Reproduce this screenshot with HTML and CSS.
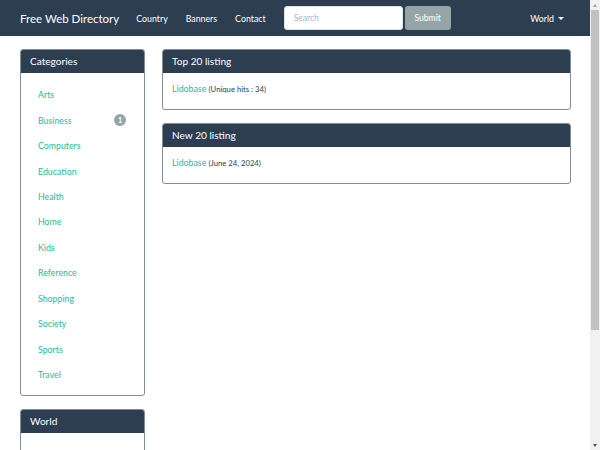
FILE: index.html
```html
<!DOCTYPE html>
<html>
<head>
<meta charset="utf-8">
<link rel="stylesheet" href="styles.css">
</head>
<body>
<nav class="navbar">
  <a class="brand" href="#">Free Web Directory</a>
  <ul class="nav">
    <li><a href="#">Country</a></li>
    <li><a href="#">Banners</a></li>
    <li><a href="#">Contact</a></li>
  </ul>
  <form class="search">
    <input class="search-input" type="text" placeholder="Search">
    <button class="submit" type="button">Submit</button>
  </form>
  <a class="world" href="#">World <span class="caret"></span></a>
</nav>
<div class="container">
  <aside class="sidebar">
    <div class="panel">
      <div class="panel-heading">Categories</div>
      <ul class="cat-list">
        <li><a href="#">Arts</a></li>
        <li><a href="#">Business</a><span class="badge">1</span></li>
        <li><a href="#">Computers</a></li>
        <li><a href="#">Education</a></li>
        <li><a href="#">Health</a></li>
        <li><a href="#">Home</a></li>
        <li><a href="#">Kids</a></li>
        <li><a href="#">Reference</a></li>
        <li><a href="#">Shopping</a></li>
        <li><a href="#">Society</a></li>
        <li><a href="#">Sports</a></li>
        <li><a href="#">Travel</a></li>
      </ul>
    </div>
    <div class="panel">
      <div class="panel-heading">World</div>
      <ul class="cat-list">
        <li><a href="#">Thailand</a></li>
        <li><a href="#">United Kingdom</a></li>
        <li><a href="#">United States</a></li>
        <li><a href="#">Australia</a></li>
        <li><a href="#">Canada</a></li>
        <li><a href="#">India</a></li>
      </ul>
    </div>
  </aside>
  <main class="main">
    <div class="panel">
      <div class="panel-heading">Top 20 listing</div>
      <div class="panel-body"><a href="#">Lidobase</a> <small>(Unique hits : 34)</small></div>
    </div>
    <div class="panel">
      <div class="panel-heading">New 20 listing</div>
      <div class="panel-body"><a href="#">Lidobase</a> <small>(June 24, 2024)</small></div>
    </div>
  </main>
</div>
<div class="scrollbar" aria-hidden="true">
  <span class="sb-arrow sb-up"></span>
  <span class="sb-thumb"></span>
  <span class="sb-arrow sb-down"></span>
</div>
</body>
</html>
```

FILE: styles.css
```css
html, body {
  margin: 0;
  padding: 0;
}
body {
  font-family: Lato, "Noto Sans", sans-serif;
  font-size: 9px;
  color: #2c3e50;
  background: #fff;
  margin-right: 10px;
}
a {
  text-decoration: none;
  color: #18bc9c;
}
ul {
  list-style: none;
  margin: 0;
  padding: 0;
}
.scrollbar {
  position: fixed;
  top: 0;
  right: 0;
  width: 10px;
  height: 100vh;
  background: #f1f1f1;
  display: flex;
  flex-direction: column;
  align-items: center;
}
.sb-arrow {
  flex: none;
  height: 10px;
  width: 10px;
  display: flex;
  align-items: center;
  justify-content: center;
}
.sb-arrow::before {
  content: "";
  width: 0;
  height: 0;
  border-left: 2.5px solid transparent;
  border-right: 2.5px solid transparent;
}
.sb-up::before {
  border-bottom: 3px solid #a3a3a3;
}
.sb-down {
  margin-top: auto;
}
.sb-down::before {
  border-top: 3px solid #505050;
}
.sb-thumb {
  width: 8px;
  height: 320px;
  background: #c1c1c1;
}
.navbar {
  height: 36px;
  background: #2c3e50;
  display: flex;
  align-items: center;
  padding: 0 26px 0 20px;
}
.brand {
  color: #fff;
  font-size: 11.5px;
  margin-right: 8px;
}
.nav {
  display: flex;
}
.nav a {
  display: block;
  color: #fff;
  font-size: 8.8px;
  padding: 0 9px;
}
.search {
  display: flex;
  margin-left: 9px;
  gap: 2px;
}
.search-input {
  width: 119px;
  height: 24px;
  box-sizing: border-box;
  border: 1px solid #dce4ec;
  border-radius: 3px;
  padding: 0 9px;
  font-family: Lato, sans-serif;
  font-size: 8.6px;
  color: #2c3e50;
  outline: none;
}
.search-input::placeholder {
  color: #acb6c0;
}
.submit {
  width: 46px;
  height: 24px;
  background: #95a5a6;
  border: none;
  border-radius: 3px;
  color: #fff;
  font-family: Lato, sans-serif;
  font-size: 8.6px;
  padding: 0;
}
.world {
  margin-left: auto;
  color: #fff;
  font-size: 8.8px;
  display: flex;
  align-items: center;
  gap: 4px;
}
.caret {
  display: inline-block;
  width: 0;
  height: 0;
  border-top: 3px solid #fff;
  border-left: 3px solid transparent;
  border-right: 3px solid transparent;
}
.container {
  display: flex;
  gap: 17px;
  padding: 13px 19px 0 20px;
  align-items: flex-start;
}
.sidebar {
  width: 125px;
  flex: none;
}
.main {
  flex: 1;
}
.panel {
  border: 1px solid #7f8e9c;
  border-radius: 3px;
  margin-bottom: 13px;
  overflow: hidden;
  background: #fff;
}
.panel-heading {
  background: #2c3e50;
  color: #fff;
  height: 23px;
  line-height: 23px;
  padding: 0 9px;
  font-size: 10.1px;
}
.panel-body {
  padding: 0 9px;
  height: 36px;
  line-height: 31px;
  font-size: 8.8px;
}
.panel-body small {
  font-size: 7.7px;
  color: #2c3e50;
}
.cat-list {
  padding: 9px 0 8px;
}
.cat-list li {
  height: 25.45px;
  display: flex;
  align-items: center;
  padding: 0 18px 0 17px;
  font-size: 8.8px;
}
.badge {
  margin-left: auto;
  width: 12px;
  height: 12px;
  border-radius: 6px;
  background: #95a5a6;
  color: #fff;
  font-size: 7px;
  font-weight: bold;
  display: flex;
  align-items: center;
  justify-content: center;
}
```
